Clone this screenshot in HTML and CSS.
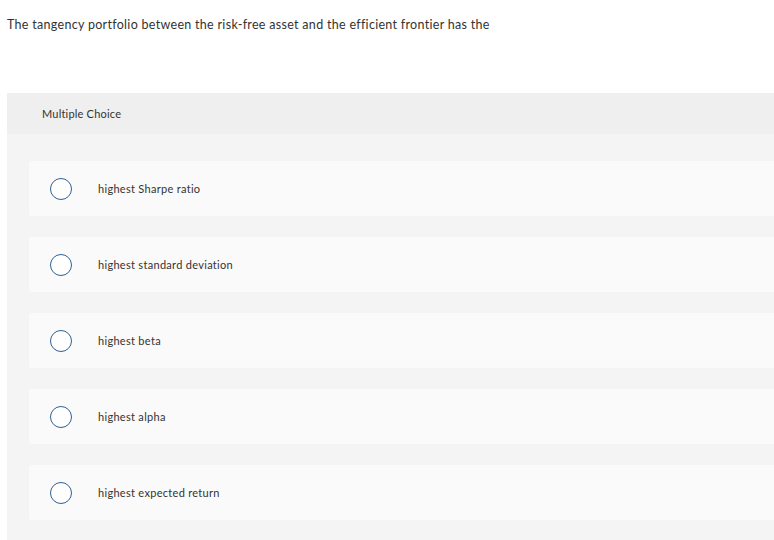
FILE: index.html
```html
<!DOCTYPE html>
<html lang="en">
<head>
    <meta charset="UTF-8">
    <meta name="viewport" content="width=device-width, initial-scale=1.0">
    <title>Multiple Choice</title>
    <link rel="stylesheet" href="styles.css">
</head>
<body>
    <!-- Question Prompt -->
    <p class="question-prompt">The tangency portfolio between the risk-free asset and the efficient frontier has the</p>
    <!-- Choice Panel -->
    <div class="choice-panel">
        <div class="choice-header">Multiple Choice</div>
        <div class="choice-list">
            <label class="choice-item">
                <span class="choice-radio"></span>
                <span class="choice-text">highest Sharpe ratio</span>
            </label>
            <label class="choice-item">
                <span class="choice-radio"></span>
                <span class="choice-text">highest standard deviation</span>
            </label>
            <label class="choice-item">
                <span class="choice-radio"></span>
                <span class="choice-text">highest beta</span>
            </label>
            <label class="choice-item">
                <span class="choice-radio"></span>
                <span class="choice-text">highest alpha</span>
            </label>
            <label class="choice-item">
                <span class="choice-radio"></span>
                <span class="choice-text">highest expected return</span>
            </label>
        </div>
    </div>
</body>
</html>
```

FILE: styles.css
```css
/* Global Styling */
body {
    margin: 0;
    font-family: Lato, "Noto Sans", sans-serif;
    color: #333333;
    background-color: #ffffff;
    overflow: hidden;
}
/* Question Prompt */
.question-prompt {
    margin: 0;
    padding: 16px 0 0 7px;
    font-size: 12.5px;
    letter-spacing: 0.3px;
    line-height: 17px;
    height: 77px;
}
/* Choice Panel */
.choice-panel {
    margin-left: 7px;
    background-color: #f4f4f4;
}
.choice-header {
    background-color: #efefef;
    height: 41px;
    padding-left: 35px;
    display: flex;
    align-items: center;
    font-size: 11px;
    letter-spacing: 0.2px;
}
.choice-list {
    display: flex;
    flex-direction: column;
    gap: 21px;
    padding: 27px 0 30px 22px;
}
.choice-item {
    background-color: #fafafa;
    border-radius: 3px 0 0 3px;
    height: 55px;
    display: flex;
    align-items: center;
    padding-left: 21px;
    cursor: pointer;
}
.choice-radio {
    width: 20px;
    height: 20px;
    border: 1.5px solid #2e6195;
    border-radius: 50%;
    background-color: #ffffff;
    flex-shrink: 0;
}
.choice-text {
    margin-left: 26px;
    font-size: 11px;
    letter-spacing: 0.3px;
}
```
